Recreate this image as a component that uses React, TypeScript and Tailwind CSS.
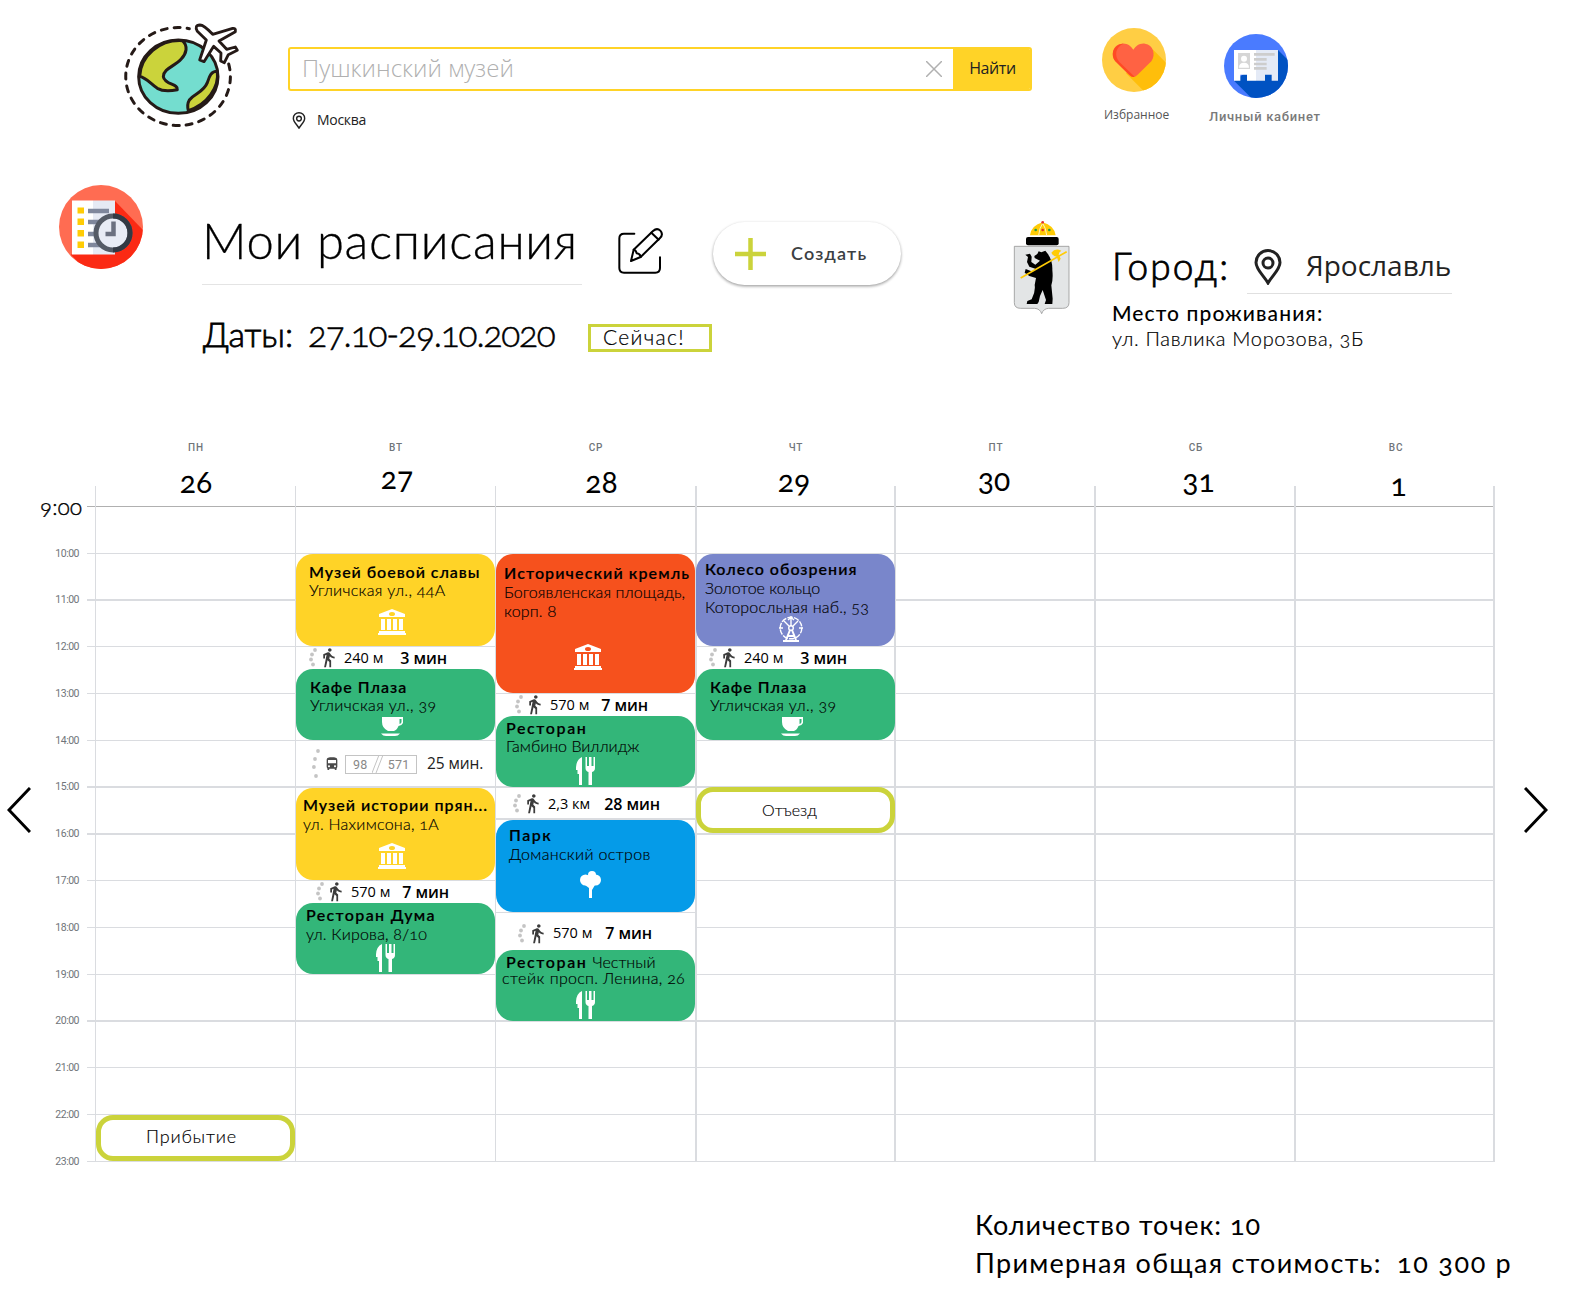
import type { ReactNode } from 'react';
import { MdDirectionsBus, MdDirectionsWalk } from 'react-icons/md';

const HOURS = [
  { time: '', h: 'h-[47px]', line: 'border-t border-[#b0b0b0]' },
  { time: '10:00', h: 'h-[46px]', line: 'border-t border-[#dadce0]' },
  { time: '11:00', h: 'h-[47px]', line: 'border-t-2 border-[#dadce0]' },
  { time: '12:00', h: 'h-[47px]', line: 'border-t border-[#dadce0]' },
  { time: '13:00', h: 'h-[47px]', line: 'border-t border-[#dadce0]' },
  { time: '14:00', h: 'h-[46px]', line: 'border-t border-[#dadce0]' },
  { time: '15:00', h: 'h-[47px]', line: 'border-t-2 border-[#dadce0]' },
  { time: '16:00', h: 'h-[47px]', line: 'border-t-2 border-[#dadce0]' },
  { time: '17:00', h: 'h-[47px]', line: 'border-t border-[#dadce0]' },
  { time: '18:00', h: 'h-[47px]', line: 'border-t border-[#dadce0]' },
  { time: '19:00', h: 'h-[46px]', line: 'border-t border-[#dadce0]' },
  { time: '20:00', h: 'h-[47px]', line: 'border-t-2 border-[#dadce0]' },
  { time: '21:00', h: 'h-[47px]', line: 'border-t border-[#dadce0]' },
  { time: '22:00', h: 'h-[47px]', line: 'border-t border-[#dadce0]' },
  { time: '23:00', h: 'h-px', line: 'border-t border-[#dadce0]' },
];

const DAYS = [
  { day: 'пн', date: '26', pos: 'mt-[12px] pl-0' },
  { day: 'вт', date: '27', pos: 'mt-[8px] pl-[2px]' },
  { day: 'ср', date: '28', pos: 'mt-[12px] pl-[11px]' },
  { day: 'чт', date: '29', pos: 'mt-[11px] pr-[4px]' },
  { day: 'пт', date: '30', pos: 'mt-[10px] pr-[4px]' },
  { day: 'сб', date: '31', pos: 'mt-[11px] pl-[5px]' },
  { day: 'вс', date: '1', pos: 'mt-[15px] pl-[5px]' },
];

function Logo() {
  return (
    <svg className="mt-[20px] ml-[120px] h-[110px] w-[124px] shrink-0" viewBox="60 30 372 330" fill="none" stroke="#251a17" strokeLinejoin="round" strokeLinecap="round">
      <path d="M386 162A157 147 0 1 1 268 56" strokeWidth="9" strokeDasharray="18 21" />
      <ellipse cx="235" cy="200" rx="119" ry="110" fill="#74ddcf" strokeWidth="9" />
      <path d="M119 199C122 138 178 88 247 92C265 108 260 130 243 148C225 168 190 176 190 200C194 224 236 222 232 239C212 243 186 243 172 235C152 222 140 204 119 199Z" fill="#cbd33b" strokeWidth="9" />
      <path d="M352 184C358 232 322 284 265 302C262 290 262 280 268 270C285 248 310 248 322 218C328 200 332 184 352 184Z" fill="#cbd33b" strokeWidth="9" />
      <path d="M292 64Q282 46 300 45Q312 45 338 73L398 55Q408 54 406 65L357 93L380 118L406 111L412 121L385 134L373 158L362 153L363 129L341 109L312 155L299 150L319 90Z" fill="#fff" strokeWidth="8.500" />
    </svg>
  );
}

function Pin({ className }: { className: string }) {
  return (
    <svg className={className} viewBox="0 0 28 36" fill="none" stroke="#222" strokeWidth="3">
      <path d="M14 34C10 27 2 20.500 2 13.500A12 12 0 0 1 26 13.500C26 20.500 18 27 14 34Z" />
      <circle cx="14" cy="14" r="5" />
    </svg>
  );
}

function HeartBadge() {
  return (
    <svg className="h-16 w-16" viewBox="666 54 192 192">
      <clipPath id="heart-clip"><circle cx="762" cy="150" r="96" /></clipPath>
      <g clipPath="url(#heart-clip)">
        <rect x="666" y="54" width="192" height="192" fill="#ffce44" />
        <path d="M818 118L870 170V250H798L738 190Z" fill="#ffbe0b" />
        <path d="M760 201Q754 201 748 195L706 154C692 134 698 104 725 101C742 99 752 108 760 119C768 108 778 99 795 101C820 104 828 134 814 154L772 195Q766 201 760 201Z" fill="#ff6243" />
        <path d="M730 101C700 102 690 134 706 154L748 195Q754 201 760 201L764 200L718 156C702 136 706 112 730 101Z" fill="#ff4a24" />
      </g>
    </svg>
  );
}

function ProfileBadge() {
  return (
    <svg className="h-16 w-16" viewBox="1032 72 192 192">
      <clipPath id="profile-clip"><circle cx="1128" cy="168" r="96" /></clipPath>
      <g clipPath="url(#profile-clip)">
        <rect x="1032" y="72" width="192" height="192" fill="#4a7bff" />
        <path d="M1194 120L1230 156V270H1120L1062 212Z" fill="#0052c2" />
        <path d="M1062 120H1128V212H1101V194H1081V212H1062Z" fill="#fff" />
        <path d="M1128 120H1194V212H1175V194H1155V212H1128Z" fill="#e4eaf6" />
        <rect x="1074" y="129" width="36" height="48" fill="#d6d6d6" />
        <circle cx="1092" cy="146" r="9" fill="#fff" />
        <path d="M1077 173Q1077 158 1092 158Q1107 158 1107 173Z" fill="#fff" />
        <path d="M1122 133H1184M1122 148H1160M1122 162H1160M1122 175H1160" stroke="#cdcdcd" strokeWidth="8" />
      </g>
    </svg>
  );
}

function ScheduleBadge() {
  return (
    <svg className="mt-[45px] ml-[59px] h-[84px] w-[84px] shrink-0" viewBox="0 0 84 84">
      <clipPath id="schedule-clip"><circle cx="42" cy="42" r="42" /></clipPath>
      <g clipPath="url(#schedule-clip)">
        <rect width="84" height="84" fill="#ff6c52" />
        <path d="M56 16L86 47V84H26L12 70Z" fill="#fb2a14" />
        <rect x="13" y="15.500" width="21" height="54" fill="#fff" />
        <rect x="34" y="15.500" width="22" height="54" fill="#e6eaf4" />
        <path d="M18.500 22.500h6.500v6h-6.500zM18.500 33.500h6.500v6.500h-6.500zM18.500 45h6.500v6.500h-6.500zM18.500 56.500h6.500v6.500h-6.500z" fill="#ffcc05" />
        <path d="M29 26H50M29 37H46M29 49H42M29 60H44" stroke="#7f879c" strokeWidth="4.500" />
        <circle cx="54" cy="48" r="17" fill="#e8ecf5" stroke="#555b66" strokeWidth="5" />
        <path d="M54 31A17 17 0 0 1 54 65" fill="none" stroke="#333a44" strokeWidth="5" />
        <path d="M54.500 36.500V49H46.500" fill="none" stroke="#6b7180" strokeWidth="4.500" />
      </g>
    </svg>
  );
}

function EditIcon() {
  return (
    <svg className="mt-[88px] ml-[36px] h-[46px] w-[45px] shrink-0" viewBox="114 84 135 138" fill="none" stroke="#000" strokeWidth="6" strokeLinejoin="round" strokeLinecap="round">
      <path d="M163 101H132Q118 101 118 115V204Q118 218 132 218H226Q240 218 240 204V172" />
      <path d="M153 183L161 149L219 93Q231 82 241 92Q251 103 240 114L182 171Z" />
      <path d="M214 98L236 119M161 149Q168 150 170 160Q181 162 182 171" />
    </svg>
  );
}

function CoatOfArms() {
  return (
    <svg className="mt-[78px] ml-[109px] h-[98px] w-[63px] shrink-0" viewBox="60 54 189 294">
      <path d="M73 139H237V308Q237 325 218 325H176Q160 326 155 341Q150 326 134 325H92Q73 325 73 308Z" fill="#e3e5e6" stroke="#999" strokeWidth="2.500" />
      <path d="M120 106Q124 76 158 67Q192 76 197 106Z" fill="#ffcb05" />
      <path d="M146 106Q148 84 158 70Q168 84 170 106" fill="none" stroke="#fff3c0" strokeWidth="3" />
      <circle cx="158" cy="67" r="4" fill="#e0302a" />
      <circle cx="158" cy="90" r="4" fill="#e0302a" />
      <circle cx="137" cy="90" r="4" fill="#2c9b3d" />
      <circle cx="178" cy="90" r="4" fill="#2c9b3d" />
      <rect x="108" y="111" width="98" height="25" rx="6" />
      <path d="M142 162L146 154L154 157L166 152L172 160Q188 180 187 210Q190 238 184 256L188 296L187 312H164L168 300L158 270L150 288L146 306L142 312H110L112 303L125 298Q137 275 134 255L138 234L118 228L104 218L107 207L128 215L136 206L118 200L111 186L114 171L106 164L120 161L125 170L124 186L136 194L150 182L134 174L133 168Z" />
      <path d="M92 234L230 155" stroke="#ffcb05" strokeWidth="5" />
      <path d="M184 158Q196 142 214 152Q206 156 206 164L212 176L206 186L200 170Q190 170 184 158Z" fill="#ffcb05" />
    </svg>
  );
}

function Museum({ className }: { className: string }) {
  return (
    <svg className={className} width="28" height="26" viewBox="0 0 28 26" fill="#fff" fillRule="evenodd">
      <path d="M14 0L27 5V8H1V5ZM14 3A3 2 0 1 0 14 7A3 2 0 1 0 14 3ZM3 10H7V21H3ZM9 10H13V21H9ZM15 10H19V21H15ZM21 10H25V21H21ZM1 22H27V24H28V26H0V24H1Z" />
    </svg>
  );
}

function Cup({ className }: { className: string }) {
  return (
    <svg className={className} width="23" height="20" viewBox="0 0 23 20" fill="#fff">
      <path d="M1 0H22V6Q21 8.500 17.500 9Q16 13 13 14H7Q1 11 1 5ZM18.500 2V7Q20.500 6.500 20.500 5V2Z" fillRule="evenodd" />
      <path d="M0 16.500H19Q17 19 14 19H5Q2 19 0 16.500Z" />
    </svg>
  );
}

function Cutlery({ className }: { className: string }) {
  return (
    <svg className={className} width="19" height="28" viewBox="0 0 19 28" fill="#fff">
      <path d="M6 0V28H3V17H1.500V13H0Q-.5 3 6 0Z" />
      <path d="M9.500 0H11V9H13V0H15.500V9H17.500V0H19V11Q19 14 16 15V28H12.500V15Q9.500 14 9.500 11Z" />
    </svg>
  );
}

function Tree({ className }: { className: string }) {
  return (
    <svg className={className} width="21" height="27" viewBox="0 0 21 27" fill="#fff">
      <circle cx="5.500" cy="9" r="5.500" />
      <circle cx="15.500" cy="9" r="5.500" />
      <circle cx="12" cy="4" r="4" />
      <path d="M6 5H15V14L12 19V27H9V17L5 14Z" />
    </svg>
  );
}

function FerrisWheel({ className }: { className: string }) {
  return (
    <svg className={className} width="24" height="26" viewBox="0 0 24 26" fill="none" stroke="#fff" strokeWidth="1.400">
      <circle cx="12" cy="12" r="10.800" strokeDasharray="5.500 1.200" />
      <circle cx="12" cy="12" r="2.300" />
      <path d="M12 0V10M0 12H4M20 12H24M5 5L10 10M19 5L14 10M12 1.500L9 4M12 1.500L15 4" />
      <path d="M11 14L7 24M13 14L17 24M4 25H20M9 20H15" strokeWidth="2" />
    </svg>
  );
}

function Dots({ className }: { className: string }) {
  return (
    <svg className={className} width="8" height="19" viewBox="0 0 8 19" fill="#c4c4c4">
      <circle cx="6" cy="2" r="1.900" /><circle cx="3" cy="6.500" r="1.900" /><circle cx="2" cy="11.500" r="1.900" /><circle cx="4" cy="16.500" r="1.900" />
    </svg>
  );
}

function Walk({ className, distance, time, gap }: { className: string; distance: string; time: string; gap: string }) {
  return (
    <div className={`flex items-center whitespace-nowrap font-['Open_Sans',sans-serif] ${className}`}>
      <Dots className="shrink-0" />
      <MdDirectionsWalk className="ml-[1px] shrink-0 text-[#3c3c3c]" size={21} />
      <span className="ml-[5px] text-[14.5px]">{distance}</span>
      <span className={`text-[16px] font-semibold tracking-[-0.1px] ${gap}`}>{time}</span>
    </div>
  );
}

function Card({ className, children }: { className: string; children: ReactNode }) {
  return <div className={`w-[199px] shrink-0 rounded-[17px] text-[16px] leading-[19px] whitespace-nowrap [-webkit-text-stroke:0.15px] ${className}`}>{children}</div>;
}

function Cafe({ className, indent }: { className: string; indent: string }) {
  return (
    <Card className={`h-[71px] bg-[#33b679] pt-[8px] ${className}`}>
      <p className={`font-semibold tracking-[1px] ${indent}`}>Кафе Плаза</p>
      <p className={`-mt-px font-light tracking-[0.35px] ${indent}`}>Угличская ул., <span className="oldstyle-nums">39</span></p>
      <Cup className="mt-[3px] ml-[85px]" />
    </Card>
  );
}

export default function App() {
  return (
    <div className="flex h-[1308px] w-[1588px] flex-col overflow-hidden bg-white font-['Lato',sans-serif] text-black">
      <header className="flex h-[140px] shrink-0 items-start">
        <Logo />
        <div className="mt-[47px] ml-[44px] w-[744px] font-['Open_Sans',sans-serif]">
          <div className="flex h-[44px] overflow-hidden rounded-[3px] border-2 border-[#ffd327]">
            <div className="flex flex-1 items-center justify-between pr-[11px] pl-[12px]">
              <span className="pb-[3px] text-[24px] leading-[36px] font-light text-[#b0b0b0]">Пушкинский музей</span>
              <svg width="16" height="16" viewBox="0 0 16 16" stroke="#b0b0b0" strokeWidth="1.500"><path d="M0 0L16 16M16 0L0 16" /></svg>
            </div>
            <button className="w-[77px] bg-[#ffd327] pb-[2px] pl-[2px] text-[16px] tracking-[-0.4px] text-[#222]">Найти</button>
          </div>
          <div className="mt-[20px] flex items-center pl-[4px]">
            <Pin className="h-[17px] w-[14px]" />
            <span className="ml-[11px] text-[14px] leading-[18px] tracking-[-0.3px] text-[#222]">Москва</span>
          </div>
        </div>
        <div className="mt-[28px] ml-[70px] flex w-[70px] flex-col">
          <HeartBadge />
          <span className="mt-[15px] ml-[2px] font-['Open_Sans',sans-serif] text-[12px] leading-[16px] text-[#555]">Избранное</span>
        </div>
        <div className="mt-[34px] ml-[52px] flex w-[120px] flex-col">
          <ProfileBadge />
          <span className="mt-[11px] -ml-[15px] font-['Roboto',sans-serif] text-[13px] leading-[16px] font-medium tracking-[0.7px] whitespace-nowrap text-[#7a7a7a]">Личный кабинет</span>
        </div>
      </header>

      <section className="flex h-[300px] shrink-0 items-start whitespace-nowrap">
        <ScheduleBadge />
        <div className="ml-[60px] w-[698px]">
          <div className="flex h-[145px] items-start">
            <h1 className="mt-[70px] -ml-px h-[75px] w-[380px] shrink-0 border-b border-[#e4e4e4] text-[49px] leading-[60px] font-light tracking-[0.7px] [-webkit-text-stroke:0.3px]">Мои расписания</h1>
            <EditIcon />
            <button className="mt-[82px] ml-[50px] flex h-[63px] w-[188px] shrink-0 items-center rounded-full bg-white pl-[22px] shadow-[0_1px_3px_rgba(0,0,0,0.3),0_2px_3px_rgba(0,0,0,0.12)]">
              <svg width="31" height="32" viewBox="0 0 31 32" stroke="#cbd33b" strokeWidth="4.500"><path d="M15.500 0V32M0 16H31" /></svg>
              <span className="ml-[25px] text-[18px] font-semibold tracking-[1.200px] text-[#3c4043]">Создать</span>
            </button>
          </div>
          <div className="flex items-start pt-[28px]">
            <div className="flex w-[385px] items-baseline leading-[40px]">
              <span className="w-[105px] text-[34px] font-light [-webkit-text-stroke:0.8px]">Даты:</span>
              <span className="text-[35px] font-light tracking-[-1.1px] oldstyle-nums [-webkit-text-stroke:0.5px]">27.10-29.10.2020</span>
            </div>
            <div className="mt-[11px] h-[28px] w-[124px] border-[3px] border-[#cbd33b] pl-[12px] text-[21px] leading-[19px] font-light tracking-[1.300px] [-webkit-text-stroke:0.2px]">Сейчас!</div>
          </div>
        </div>
        <CoatOfArms />
        <div className="mt-[104px] ml-[39px]">
          <div className="flex h-[50px] leading-[44px]">
            <span className="w-[135px] text-[37px] font-light tracking-[2.200px] [-webkit-text-stroke:0.8px]">Город:</span>
            <div className="flex w-[205px] border-b border-[#e0e0e0] font-['Open_Sans',sans-serif] text-[28px] text-[#222]">
              <Pin className="mt-[5px] ml-[7px] h-[36px] w-[28px]" />
              <span className="-mt-px ml-[24px]">Ярославль</span>
            </div>
          </div>
          <p className="mt-[6px] text-[21px] leading-[25px] font-medium tracking-[1.100px]">Место проживания:</p>
          <p className="text-[20px] leading-[26px] font-light tracking-[0.700px] oldstyle-nums [-webkit-text-stroke:0.2px]">ул. Павлика Морозова, 3Б</p>
        </div>
      </section>

      <main className="grid h-[722px] shrink-0">
        <div className="col-start-1 row-start-1 w-[1494px] pt-[66px]">
          {HOURS.map(({ time, h, line }) => (
            <div key={time} className={`flex ${h}`}>
              {time ? (
                <span className="-mt-[7px] h-[14px] w-[79px] text-right font-['Roboto',sans-serif] text-[10.5px] leading-[15px] tracking-[-0.500px] text-[#70757a]">{time}</span>
              ) : (
                <span className="-mt-[11px] h-[24px] w-[79px] pl-[40px] text-[22px] leading-[24px] font-light tracking-[0.3px] oldstyle-nums [-webkit-text-stroke:0.4px]">9:00</span>
              )}
              <div className={`ml-[8px] flex-1 ${line}`} />
            </div>
          ))}
        </div>

        <div className="col-start-1 row-start-1 flex pl-[96px]">
          {DAYS.map(({ day, date, pos }) => (
            <div key={day} className="flex w-[200px] flex-col items-center pt-[2px]">
              <span className="font-['Roboto',sans-serif] text-[10px] leading-[12px] font-medium tracking-[0.800px] text-[#70757a] uppercase">{day}</span>
              <span className={`text-[30px] leading-[30px] oldstyle-nums ${pos}`}>{date}</span>
            </div>
          ))}
        </div>

        <div className="col-start-1 row-start-1 mt-[46px] flex h-[676px] pl-[95px]">
          <div className="w-[200px] border-l border-[#dadce0]">
            <Card className="mt-[629px] h-[46px] border-[5px] border-[#cbd33b] pl-[45px] !text-[18px] !leading-[33px] tracking-[0.800px]">
              <span className="font-light">Прибытие</span>
            </Card>
          </div>

          <div className="flex w-[200px] flex-col border-l border-[#dadce0]">
            <Card className="mt-[68px] h-[92px] bg-[#ffd327] pt-[8px]">
              <p className="pl-[13px] font-semibold tracking-[0.950px]">Музей боевой славы</p>
              <p className="-mt-px pl-[13px] font-light tracking-[0.300px]">Угличская ул., <span className="oldstyle-nums">44</span>А</p>
              <Museum className="mt-[10px] ml-[82px]" />
            </Card>
            <Walk className="h-[23px] pl-[13px]" distance="240 м" time="3 мин" gap="ml-[17px]" />
            <Cafe className="" indent="pl-[14px]" />
            <div className="flex h-[48px] items-center pl-[16px] font-['Open_Sans',sans-serif]">
              <svg width="8" height="30" viewBox="0 0 8 30" fill="#c4c4c4"><circle cx="6" cy="2" r="1.900" /><circle cx="3" cy="10" r="1.900" /><circle cx="1.900" cy="18" r="1.900" /><circle cx="4" cy="27" r="1.900" /></svg>
              <MdDirectionsBus className="ml-[4px] text-[#4a4a4a]" size={16} />
              <div className="ml-[5px] flex h-[19px] w-[72px] items-center border border-[#c4c4c4] pl-[7px] font-['Roboto',sans-serif] text-[12.5px] leading-[17px] tracking-[0.3px] text-[#888]">
                <span>98</span>
                <svg className="mr-[5px] ml-[4px]" width="11" height="18" viewBox="0 0 11 18" stroke="#c4c4c4"><path d="M7 0L0 18M11 0L4 18" /></svg>
                <span>571</span>
              </div>
              <span className="ml-[10px] pb-px text-[15.500px] tracking-[-0.1px] whitespace-nowrap text-[#222]">25 мин.</span>
            </div>
            <Card className="h-[92px] bg-[#ffd327] pt-[7px]">
              <p className="pl-[7px] font-semibold tracking-[1px]">Музей истории прян...</p>
              <p className="pl-[7px] font-light tracking-[0.250px] oldstyle-nums">ул. Нахимсона, 1А</p>
              <Museum className="mt-[10px] ml-[82px]" />
            </Card>
            <Walk className="h-[23px] pl-[20px]" distance="570 м" time="7 мин" gap="ml-[12px]" />
            <Card className="h-[71px] bg-[#33b679] pt-[2px]">
              <p className="pl-[10px] font-semibold tracking-[1.350px]">Ресторан Дума</p>
              <p className="pl-[10px] font-light tracking-[0.200px] oldstyle-nums">ул. Кирова, 8/10</p>
              <Cutlery className="mt-[1px] ml-[80px]" />
            </Card>
          </div>

          <div className="flex w-[200px] flex-col border-l border-[#dadce0]">
            <Card className="mt-[68px] h-[139px] bg-[#f6511d] pt-[9px]">
              <p className="pl-[8px] font-semibold tracking-[1.100px]">Исторический кремль</p>
              <p className="pl-[8px] font-light tracking-[0.100px]">Богоявленская площадь,</p>
              <p className="pl-[8px] font-light tracking-[0.200px]">корп. 8</p>
              <Museum className="mt-[24px] ml-[78px]" />
            </Card>
            <Walk className="h-[23px] pl-[19px]" distance="570 м" time="7 мин" gap="ml-[12px]" />
            <Card className="h-[71px] bg-[#33b679] pt-[2px]">
              <p className="pl-[10px] font-semibold tracking-[1.600px]">Ресторан</p>
              <p className="-mt-px pl-[10px] font-light">Гамбино Виллидж</p>
              <Cutlery className="mt-[2px] ml-[80px]" />
            </Card>
            <Walk className="h-[33px] border-b-2 border-[#dadce0] pt-[2px] pl-[17px]" distance="2,3 км" time="28 мин" gap="ml-[14px]" />
            <Card className="h-[92px] bg-[#059be8] pt-[5px]">
              <p className="pl-[13px] font-semibold tracking-[1.500px]">Парк</p>
              <p className="pl-[13px] font-light tracking-[0.350px]">Доманский остров</p>
              <Tree className="mt-[8px] ml-[84px]" />
            </Card>
            <Walk className="h-[38px] border-t border-[#dadce0] bg-white pt-[3px] pl-[22px]" distance="570 м" time="7 мин" gap="ml-[13px]" />
            <Card className="h-[71px] bg-[#33b679] pt-[2px]">
              <p className="pl-[10px] font-light"><span className="mr-[5px] font-semibold tracking-[1.600px]">Ресторан</span>Честный</p>
              <p className="-mt-[3px] pl-[6px] font-light tracking-[0.300px] oldstyle-nums"><span className="mr-[5px] tracking-[0.500px]">стейк</span>просп. Ленина, 26</p>
              <Cutlery className="mt-[4px] ml-[80px]" />
            </Card>
          </div>

          <div className="z-10 flex w-[199px] flex-col border-l-2 border-[#dadce0]">
            <Card className="mt-[68px] -ml-px h-[92px] bg-[#7986cb] pt-[5px]">
              <p className="pl-[9px] font-semibold tracking-[1px]">Колесо обозрения</p>
              <p className="pl-[9px] font-light">Золотое кольцо</p>
              <p className="pl-[9px] font-light tracking-[0.200px]">Которосльная наб., <span className="oldstyle-nums">53</span></p>
              <FerrisWheel className="ml-[83px]" />
            </Card>
            <Walk className="-ml-px h-[23px] pl-[13px]" distance="240 м" time="3 мин" gap="ml-[17px]" />
            <Cafe className="-ml-px" indent="pl-[14px]" />
            <Card className="mt-[47px] -ml-px h-[46px] border-[5px] border-[#cbd33b] bg-white pl-[61px] !leading-[35px] font-light">Отъезд</Card>
          </div>

          <div className="w-[200px] border-l-2 border-[#dadce0]" />
          <div className="w-[200px] border-l-2 border-[#dadce0]" />
          <div className="w-[201px] border-x-2 border-[#dadce0]" />
        </div>

        <div className="pointer-events-none col-start-1 row-start-1 flex w-[1548px] items-start justify-between pt-[347px] pl-[7px]">
          <svg width="24" height="46" viewBox="0 0 24 46" fill="none" stroke="#000" strokeWidth="3"><path d="M23 1L2 23L23 45" /></svg>
          <svg width="24" height="46" viewBox="0 0 24 46" fill="none" stroke="#000" strokeWidth="3"><path d="M1 1L22 23L1 45" /></svg>
        </div>
      </main>

      <footer className="mt-[44px] pl-[975px] text-[27px] leading-[38px] whitespace-nowrap oldstyle-nums">
        <p className="tracking-[0.950px]">Количество точек: 10</p>
        <p className="flex tracking-[1.300px]"><span className="w-[422px]">Примерная общая стоимость:</span><span className="tracking-[1.700px]">10 300 р</span></p>
      </footer>
    </div>
  );
}
